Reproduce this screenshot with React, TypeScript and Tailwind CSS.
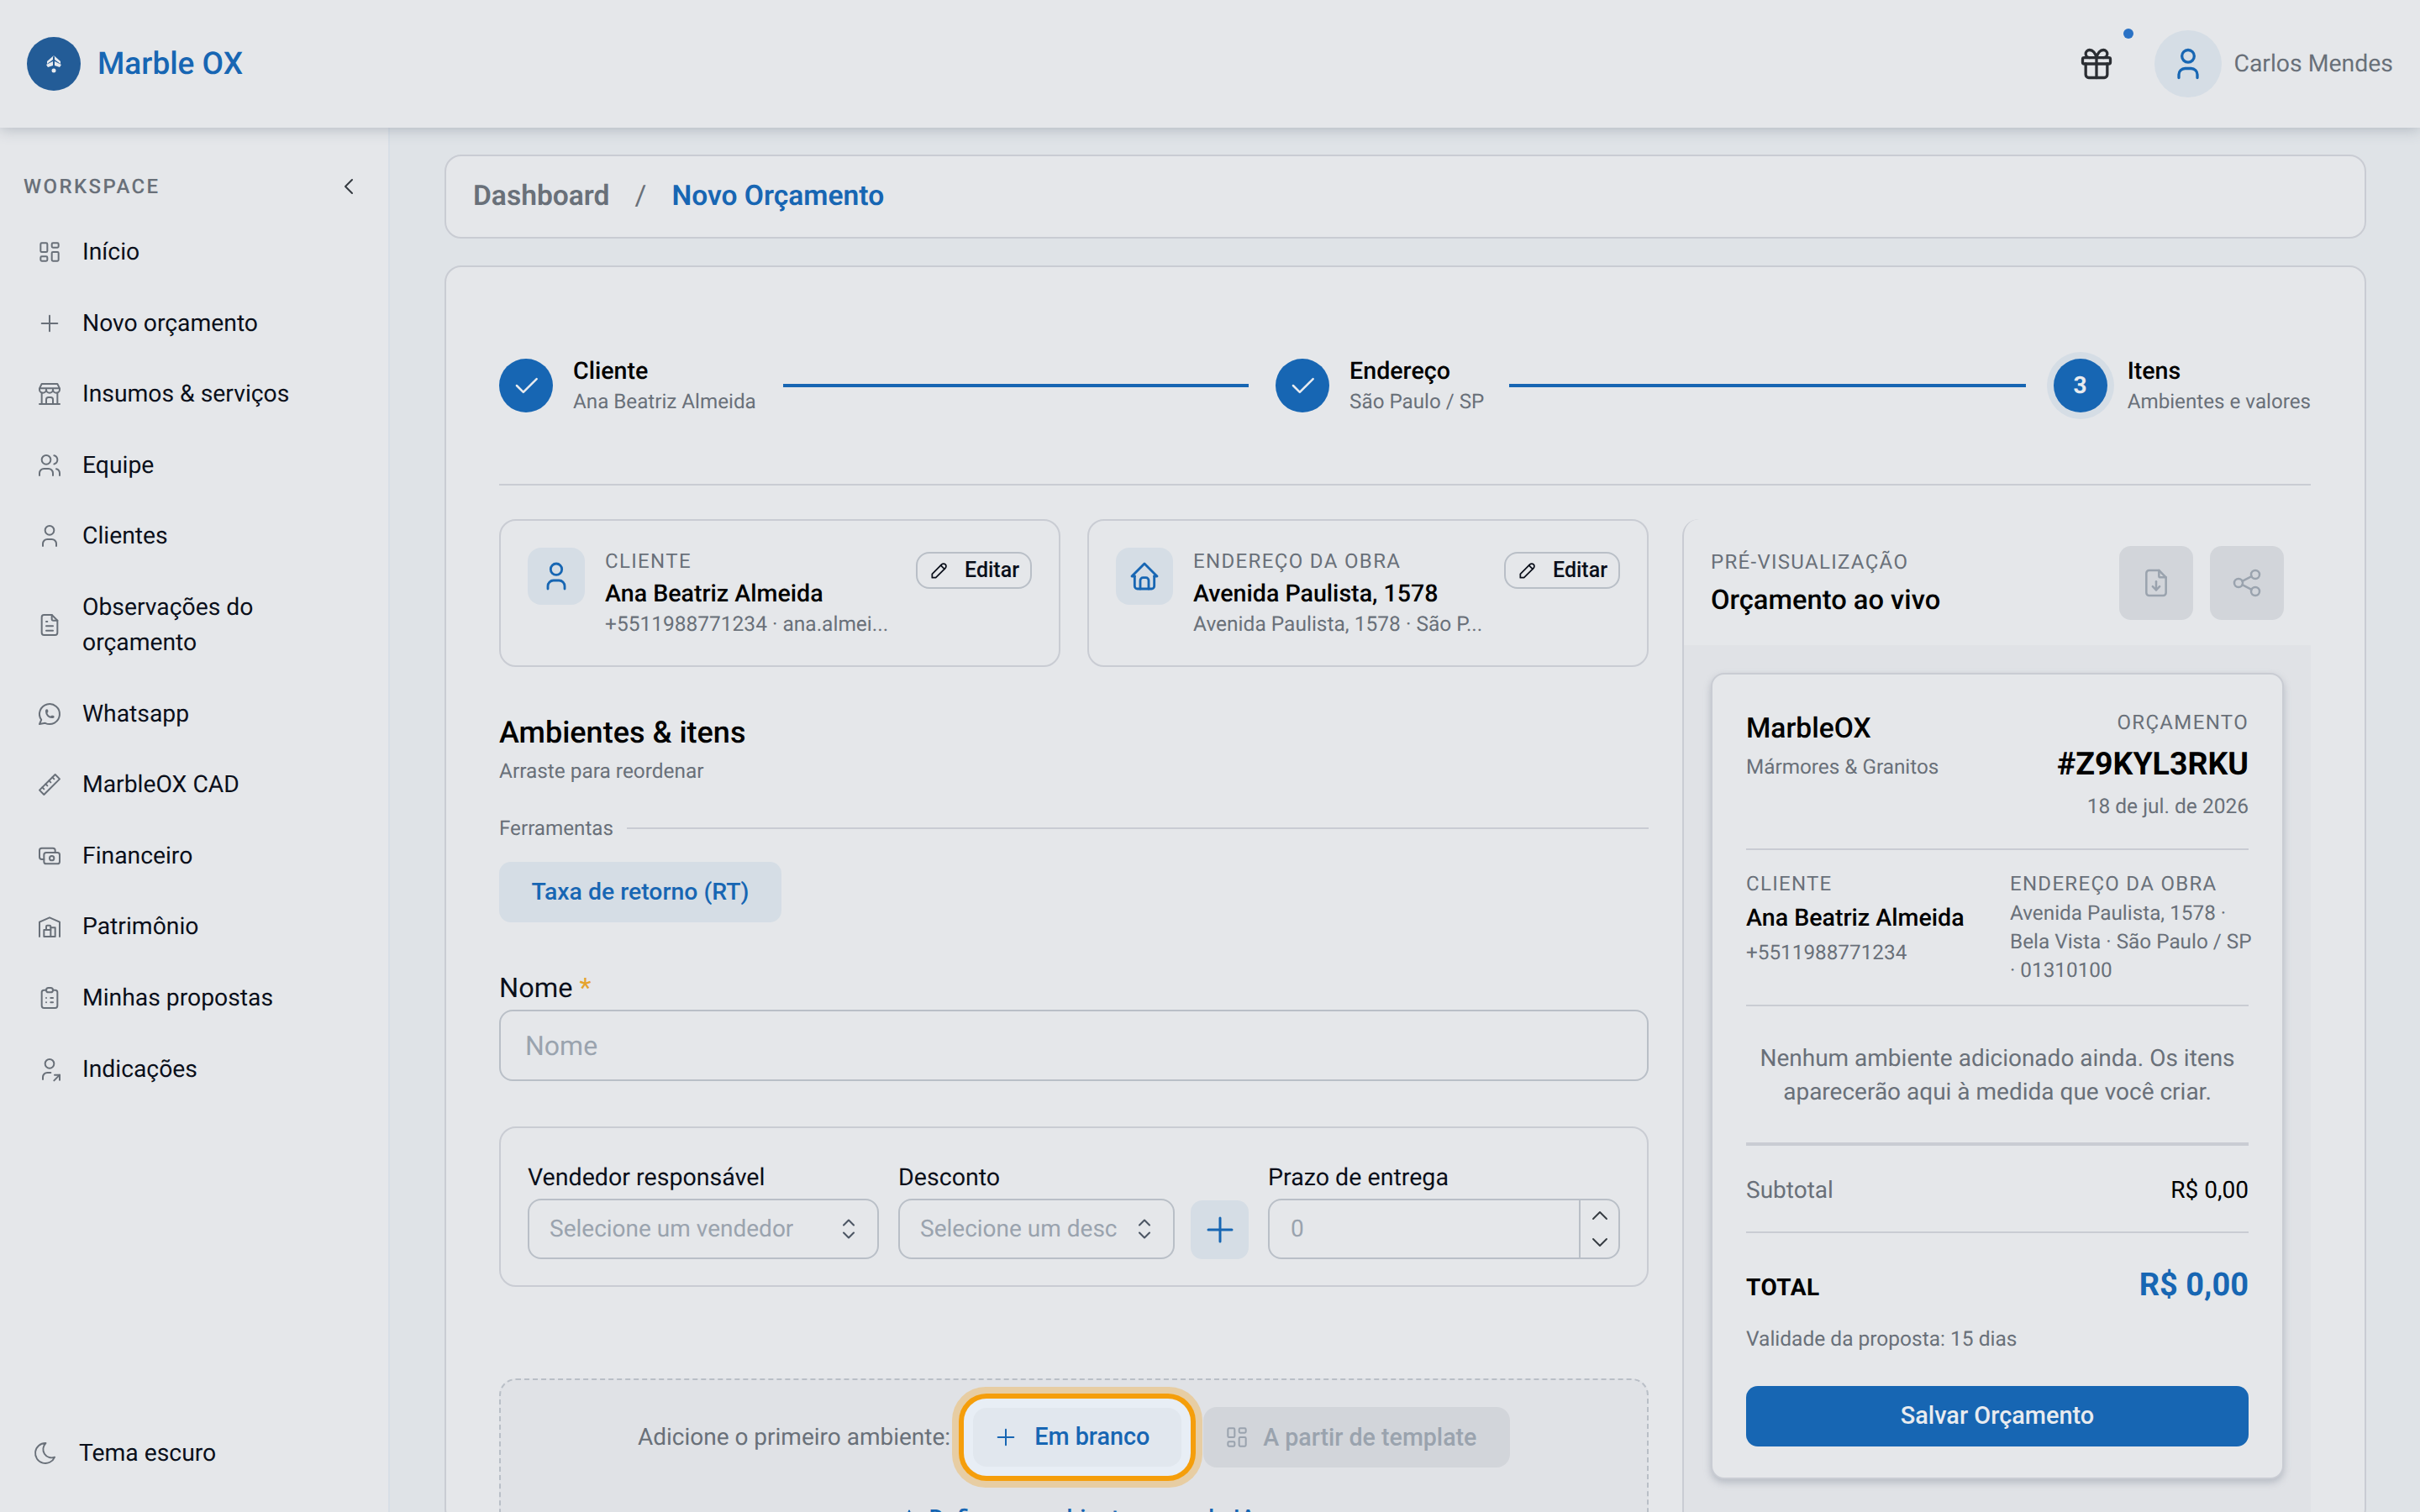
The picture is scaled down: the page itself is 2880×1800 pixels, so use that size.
import React from "react";
import {
  TbLayoutDashboard, TbPlus, TbBuildingStore, TbUsers, TbUser, TbFileText, TbBrandWhatsapp, TbRuler2,
  TbCash, TbBuildingWarehouse, TbClipboardList, TbUserShare, TbMoon, TbGift, TbHome, TbPencil,
  TbFileDownload, TbShare, TbSelector, TbChevronUp, TbChevronDown, TbChevronLeft, TbCheck, TbSparkles,
} from "react-icons/tb";

const nav = [
  { icon: TbLayoutDashboard, label: "Início" },
  { icon: TbPlus, label: "Novo orçamento" },
  { icon: TbBuildingStore, label: "Insumos & serviços" },
  { icon: TbUsers, label: "Equipe" },
  { icon: TbUser, label: "Clientes" },
  { icon: TbFileText, label: "Observações do orçamento" },
  { icon: TbBrandWhatsapp, label: "Whatsapp" },
  { icon: TbRuler2, label: "MarbleOX CAD" },
  { icon: TbCash, label: "Financeiro" },
  { icon: TbBuildingWarehouse, label: "Patrimônio" },
  { icon: TbClipboardList, label: "Minhas propostas" },
  { icon: TbUserShare, label: "Indicações" },
];

function Step({ label, sub, n }: { label: string; sub: string; n?: number }) {
  return (
    <div className="flex items-center gap-[24px] shrink-0">
      <div
        className={
          "w-[64px] h-[64px] rounded-full bg-[#1766b3] flex items-center justify-center text-[#e8ebef] " +
          (n ? "shadow-[0_0_0_8px_#d5dde5] text-[28px] font-bold" : "")
        }
      >
        {n ? n : <TbCheck size={38} strokeWidth={1.6} />}
      </div>
      <div className="flex flex-col">
        <span className="text-[28.6px] leading-[36px] font-medium text-black">{label}</span>
        <span className="text-[24.2px] leading-[34px] mt-[2px] text-[#697079]">{sub}</span>
      </div>
    </div>
  );
}

function InfoCard({ icon: Icon, label, name, sub }: { icon: any; label: string; name: string; sub: string }) {
  return (
    <div className="flex-1 h-[176px] border-2 border-[#c9ccd3] rounded-[20px] pl-[32px] pr-[32px] pt-[32px] flex items-start justify-between">
      <div className="flex gap-[24px]">
        <div className="w-[68px] h-[68px] rounded-[16px] bg-[#d5dde5] flex items-center justify-center text-[#1766b3]">
          <Icon size={40} strokeWidth={1.7} />
        </div>
        <div className="flex flex-col -mt-[2px]">
          <span className="text-[24px] leading-[36px] tracking-[1.35px] text-[#697079]">{label}</span>
          <span className="text-[28.6px] leading-[40px] font-medium text-black">{name}</span>
          <span className="text-[24.5px] leading-[34px] text-[#697079]">{sub}</span>
        </div>
      </div>
      <button className="mt-[5px] h-[44px] w-[138px] border-2 border-[#b9bfc7] rounded-[16px] flex items-center justify-center gap-[17px] text-[25px] font-medium text-[#0a0f1a]">
        <TbPencil size={26} strokeWidth={1.6} />
        Editar
      </button>
    </div>
  );
}

function Select({ width, text }: { width: string; text: string }) {
  return (
    <div className={"h-[72px] border-2 border-[#b9bfc7] rounded-[16px] pl-[24px] pr-[16px] flex items-center justify-between text-[28px] text-[#9aa3ae] " + width}>
      <span className="whitespace-nowrap overflow-hidden">{text}</span>
      <TbSelector size={36} strokeWidth={1.4} className="text-[#4b5563] shrink-0" />
    </div>
  );
}

export default function App() {
  return (
    <div className="w-[2880px] h-[1800px] overflow-hidden bg-[#dfe3e7] flex flex-col font-['Roboto',sans-serif] text-[#0a0f1a] [text-rendering:geometricPrecision]">
      <header className="relative z-10 h-[152px] shrink-0 bg-[#e5e7ea] shadow-[0_2px_16px_rgba(120,130,145,0.45)] flex items-center justify-between pl-[32px] pr-[32px]">
        <div className="flex items-center gap-[20px]">
          <div className="w-[64px] h-[64px] rounded-full bg-[#235c97] flex items-center justify-center">
            <svg width="20" height="22" viewBox="0 0 20 22" fill="#e8ebef">
              <path d="M10 1 L18 8 L18 11 L11 6 L11 3 Z" />
              <path d="M10 1 L2 8 L2 11 L9 6 L9 3 Z" />
              <path d="M9 8 L9 13 L3 15 L1 12 Z" />
              <path d="M11 8 L11 13 L17 15 L19 12 Z" />
              <circle cx="10" cy="19" r="2.5" />
            </svg>
          </div>
          <span className="text-[37px] font-medium text-[#1766b3] mt-[2px]">Marble OX</span>
        </div>
        <div className="flex items-center">
          <div className="relative mr-[47px] text-[#2b2e33]">
            <TbGift size={44} strokeWidth={1.8} />
            <span className="absolute -top-[20px] left-[54px] w-[12px] h-[12px] rounded-full bg-[#2a72c5]" />
          </div>
          <div className="w-[80px] h-[80px] rounded-full bg-[#d5dde5] flex items-center justify-center text-[#1766b3]">
            <TbUser size={44} strokeWidth={1.8} />
          </div>
          <span className="ml-[14px] text-[28.4px] text-[#697079]">Carlos Mendes</span>
        </div>
      </header>

      <div className="flex-1 flex min-h-0">
        <aside className="w-[464px] shrink-0 bg-[#e5e7ea] border-r-2 border-[#d8dfe6] flex flex-col">
          <div className="mt-[55px] pl-[28px] pr-[31px] flex items-center justify-between h-[30px]">
            <span className="text-[24px] leading-[30px] font-medium tracking-[0.1em] text-[#697079]">WORKSPACE</span>
            <TbChevronLeft size={32} strokeWidth={1.5} className="text-[#343a40]" />
          </div>
          <nav className="mt-[42px] pl-[43px] pr-[60px] flex flex-col gap-[42.6px]">
            {nav.map((n) => (
              <div key={n.label} className="flex items-center gap-[23px] text-[28.3px] leading-[42px] text-[#0a0f1a]">
                <n.icon size={32} strokeWidth={1.5} className="text-[#697079] shrink-0" />
                <span>{n.label}</span>
              </div>
            ))}
          </nav>
          <div className="mt-auto mb-[49px] pl-[38px] flex items-center gap-[24px] text-[28.3px] leading-[42px]">
            <TbMoon size={32} strokeWidth={1.4} className="text-[#697079]" />
            <span>Tema escuro</span>
          </div>
        </aside>

        <main className="flex-1 min-w-0 pt-[32px] pl-[65px] pr-[64px]">
          <div className="h-[100px] bg-[#e5e7ea] border-2 border-[#c9ccd3] rounded-[20px] flex items-center pl-[32px] text-[33.6px] font-semibold">
            <span className="text-[#697079]">Dashboard</span>
            <span className="mx-[30px] text-[#697079] font-normal">/</span>
            <span className="text-[#1766b3]">Novo Orçamento</span>
          </div>

          <div className="mt-[32px] bg-[#e5e7ea] border-2 border-[#c9ccd3] rounded-[20px] pl-[63px] pr-[64px] h-[1500px]">
            <div className="pt-[105px] pb-[81px] flex items-center border-b-2 border-[#c9ccd3]">
              <Step label="Cliente" sub="Ana Beatriz Almeida" />
              <div className="w-[555px] h-[4px] bg-[#1766b3] ml-[32px] mr-[32px]" />
              <Step label="Endereço" sub="São Paulo / SP" />
              <div className="w-[615px] h-[4px] bg-[#1766b3] ml-[30px] mr-[33px]" />
              <Step label="Itens" sub="Ambientes e valores" n={3} />
            </div>

            <div className="mt-[40px] flex gap-[40px]">
              <div className="w-[1368px] shrink-0">
                <div className="flex gap-[32px]">
                  <InfoCard icon={TbUser} label="CLIENTE" name="Ana Beatriz Almeida" sub="+5511988771234 · ana.almei..." />
                  <InfoCard icon={TbHome} label="ENDEREÇO DA OBRA" name="Avenida Paulista, 1578" sub="Avenida Paulista, 1578 · São P..." />
                </div>

                <h2 className="mt-[54px] text-[36px] leading-[48px] font-medium text-black">Ambientes &amp; itens</h2>
                <p className="mt-[4px] text-[24.4px] leading-[36px] text-[#697079]">Arraste para reordenar</p>
                <div className="mt-[32px] flex items-center gap-[16px]">
                  <span className="text-[24.2px] leading-[36px] text-[#697079]">Ferramentas</span>
                  <div className="flex-1 h-[2px] bg-[#c9ccd3]" />
                </div>
                <button className="mt-[22px] h-[72px] w-[336px] rounded-[14px] bg-[#d5dde5] text-[28.4px] font-medium text-[#1766b3]">
                  Taxa de retorno (RT)
                </button>

                <label className="block mt-[56px] text-[32.5px] leading-[44px] font-normal text-[#0a0f1a]">
                  Nome <span className="text-[#e5a32e]">*</span>
                </label>
                <div className="mt-[4px] h-[85px] border-2 border-[#b9bfc7] rounded-[16px] pl-[29px] flex items-center text-[32px] text-[#9aa3ae]">
                  Nome
                </div>

                <div className="mt-[54px] h-[191px] border-2 border-[#c9ccd3] rounded-[20px] pl-[32px] pr-[32px] pt-[39px]">
                  <div className="flex items-end">
                    <div className="w-[418px]">
                      <div className="text-[28.6px] leading-[38px] font-normal text-[#0a0f1a] mb-[7px]">Vendedor responsável</div>
                      <Select width="w-[418px]" text="Selecione um vendedor" />
                    </div>
                    <div className="ml-[23px] w-[329px]">
                      <div className="text-[28.6px] leading-[38px] font-normal text-[#0a0f1a] mb-[7px]">Desconto</div>
                      <Select width="w-[329px]" text="Selecione um desc" />
                    </div>
                    <div className="ml-[19px] w-[69px] h-[70px] rounded-[14px] bg-[#d5dde5] flex items-center justify-center text-[#1766b3]">
                      <TbPlus size={48} strokeWidth={1.5} />
                    </div>
                    <div className="ml-[23px] w-[419px]">
                      <div className="text-[28.6px] leading-[38px] font-normal text-[#0a0f1a] mb-[7px]">Prazo de entrega</div>
                      <div className="h-[72px] border-2 border-[#b9bfc7] rounded-[16px] flex items-center text-[28px] text-[#9aa3ae]">
                        <span className="flex-1 pl-[25px]">0</span>
                        <div className="w-[47px] h-full border-l-2 border-[#b9bfc7] flex flex-col items-center justify-between py-[2px] text-[#343a40]">
                          <TbChevronUp size={32} strokeWidth={1.4} />
                          <TbChevronDown size={32} strokeWidth={1.4} />
                        </div>
                      </div>
                    </div>
                  </div>
                </div>

                <div className="mt-[109px] h-[300px] bg-[#e0e2e6] border-2 border-dashed border-[#b9bfc7] rounded-[20px] pt-[32px]">
                  <div className="flex items-center justify-center h-[72px] text-[28px] text-[#697079]">
                    <span>Adicione o primeiro ambiente:</span>
                    <button className="ml-[27px] w-[248px] h-[70px] pl-[23px] rounded-[16px] bg-[#e1e7ee] flex items-center justify-start gap-[18px] text-[28.8px] font-medium text-[#1766b3] shadow-[0_0_0_11px_#e8eef5,0_0_0_17px_#f59e0b,0_0_0_25px_#e7cda3]">
                      <TbPlus size={32} strokeWidth={1.5} />
                      Em branco
                    </button>
                    <button className="ml-[26px] w-[365px] h-[72px] pl-[24px] rounded-[16px] bg-[#d2d5da] flex items-center justify-start gap-[15px] text-[28.6px] font-medium text-[#9aa3ae]">
                      <TbLayoutDashboard size={32} strokeWidth={1.5} />
                      A partir de template
                    </button>
                  </div>
                  <div className="mt-[40px] flex items-center justify-center gap-[16px] text-[28px] font-medium text-[#1766b3]">
                    <TbSparkles size={28} strokeWidth={1.8} />
                    Defina os ambientes usando IA
                  </div>
                </div>
              </div>

              <aside className="w-[748px] shrink-0 min-w-0 border-l-2 border-[#c9ccd3] rounded-tl-[20px]">
                <div className="h-[150px] pl-[32px] pr-[32px] flex items-center justify-between">
                  <div className="flex flex-col">
                    <span className="text-[24px] leading-[36px] tracking-[1.3px] text-[#697079]">PRÉ-VISUALIZAÇÃO</span>
                    <span className="mt-[5px] text-[32.7px] leading-[44px] font-medium text-black">Orçamento ao vivo</span>
                  </div>
                  <div className="flex gap-[20px] text-[#9aa3ae] mt-[2px]">
                    <div className="w-[88px] h-[88px] rounded-[14px] bg-[#d2d5da] flex items-center justify-center"><TbFileDownload size={40} strokeWidth={1.5} /></div>
                    <div className="w-[88px] h-[88px] rounded-[14px] bg-[#d2d5da] flex items-center justify-center"><TbShare size={40} strokeWidth={1.5} /></div>
                  </div>
                </div>
                <div className="bg-[#e0e2e6] pt-[33px] pl-[32px] pr-[32px] h-[1100px]">
                  <div className="h-[960px] bg-[#e5e7ea] border-2 border-[#c9ccd3] rounded-[16px] shadow-[0_4px_8px_rgba(120,130,145,0.4)] px-[40px] pt-[39px]">
                    <div className="flex justify-between">
                      <div className="pt-[4px]">
                        <div className="text-[33.6px] leading-[44px] font-medium text-black">MarbleOX</div>
                        <div className="text-[24.3px] leading-[36px] text-[#697079] mt-[5px]">Mármores &amp; Granitos</div>
                      </div>
                      <div className="text-right">
                        <div className="text-[24px] leading-[36px] tracking-[1.35px] text-[#697079]">ORÇAMENTO</div>
                        <div className="text-[37.5px] leading-[48px] font-bold text-black mt-[8px]">#Z9KYL3RKU</div>
                        <div className="text-[24.5px] leading-[36px] text-[#697079] mt-[8px]">18 de jul. de 2026</div>
                      </div>
                    </div>
                    <div className="mt-[32px] h-[2px] bg-[#c9ccd3]" />
                    <div className="mt-[22px] flex">
                      <div className="w-[314px]">
                        <div className="text-[24px] leading-[36px] tracking-[1.3px] text-[#697079]">CLIENTE</div>
                        <div className="text-[28.6px] leading-[40px] font-medium text-black mt-[2px]">Ana Beatriz Almeida</div>
                        <div className="text-[24.3px] leading-[36px] text-[#697079] mt-[4px]">+5511988771234</div>
                      </div>
                      <div className="flex-1 min-w-0">
                        <div className="text-[24px] leading-[36px] tracking-[1.3px] text-[#697079]">ENDEREÇO DA OBRA</div>
                        <div className="text-[24.3px] leading-[34px] text-[#697079] whitespace-nowrap">
                          Avenida Paulista, 1578 ·<br />Bela Vista · São Paulo / SP<br />· 01310100
                        </div>
                      </div>
                    </div>
                    <div className="mt-[24px] h-[2px] bg-[#c9ccd3]" />
                    <p className="mt-[42px] text-center text-[28px] leading-[40px] text-[#697079]">
                      Nenhum ambiente adicionado ainda. Os itens aparecerão aqui à medida que você criar.
                    </p>
                    <div className="mt-[40px] h-[4px] bg-[#c9ccd3]" />
                    <div className="mt-[32px] flex justify-between items-center text-[28px] leading-[42px]">
                      <span className="text-[#697079]">Subtotal</span>
                      <span className="text-black">R$ 0,00</span>
                    </div>
                    <div className="mt-[28px] h-[2px] bg-[#c9ccd3]" />
                    <div className="mt-[34px] flex justify-between items-center">
                      <span className="text-[28px] tracking-[0.5px] font-bold text-black mt-[6px]">TOTAL</span>
                      <span className="text-[38px] leading-[56px] font-bold text-[#1766b3]">R$ 0,00</span>
                    </div>
                    <div className="mt-[18px] text-[24.5px] leading-[36px] text-[#697079]">Validade da proposta: 15 dias</div>
                    <button className="mt-[38px] w-full h-[72px] rounded-[14px] bg-[#1766b3] text-[28.9px] font-medium text-[#e8ebef]">Salvar Orçamento</button>
                  </div>
                </div>
              </aside>
            </div>
          </div>
        </main>
      </div>
    </div>
  );
}
